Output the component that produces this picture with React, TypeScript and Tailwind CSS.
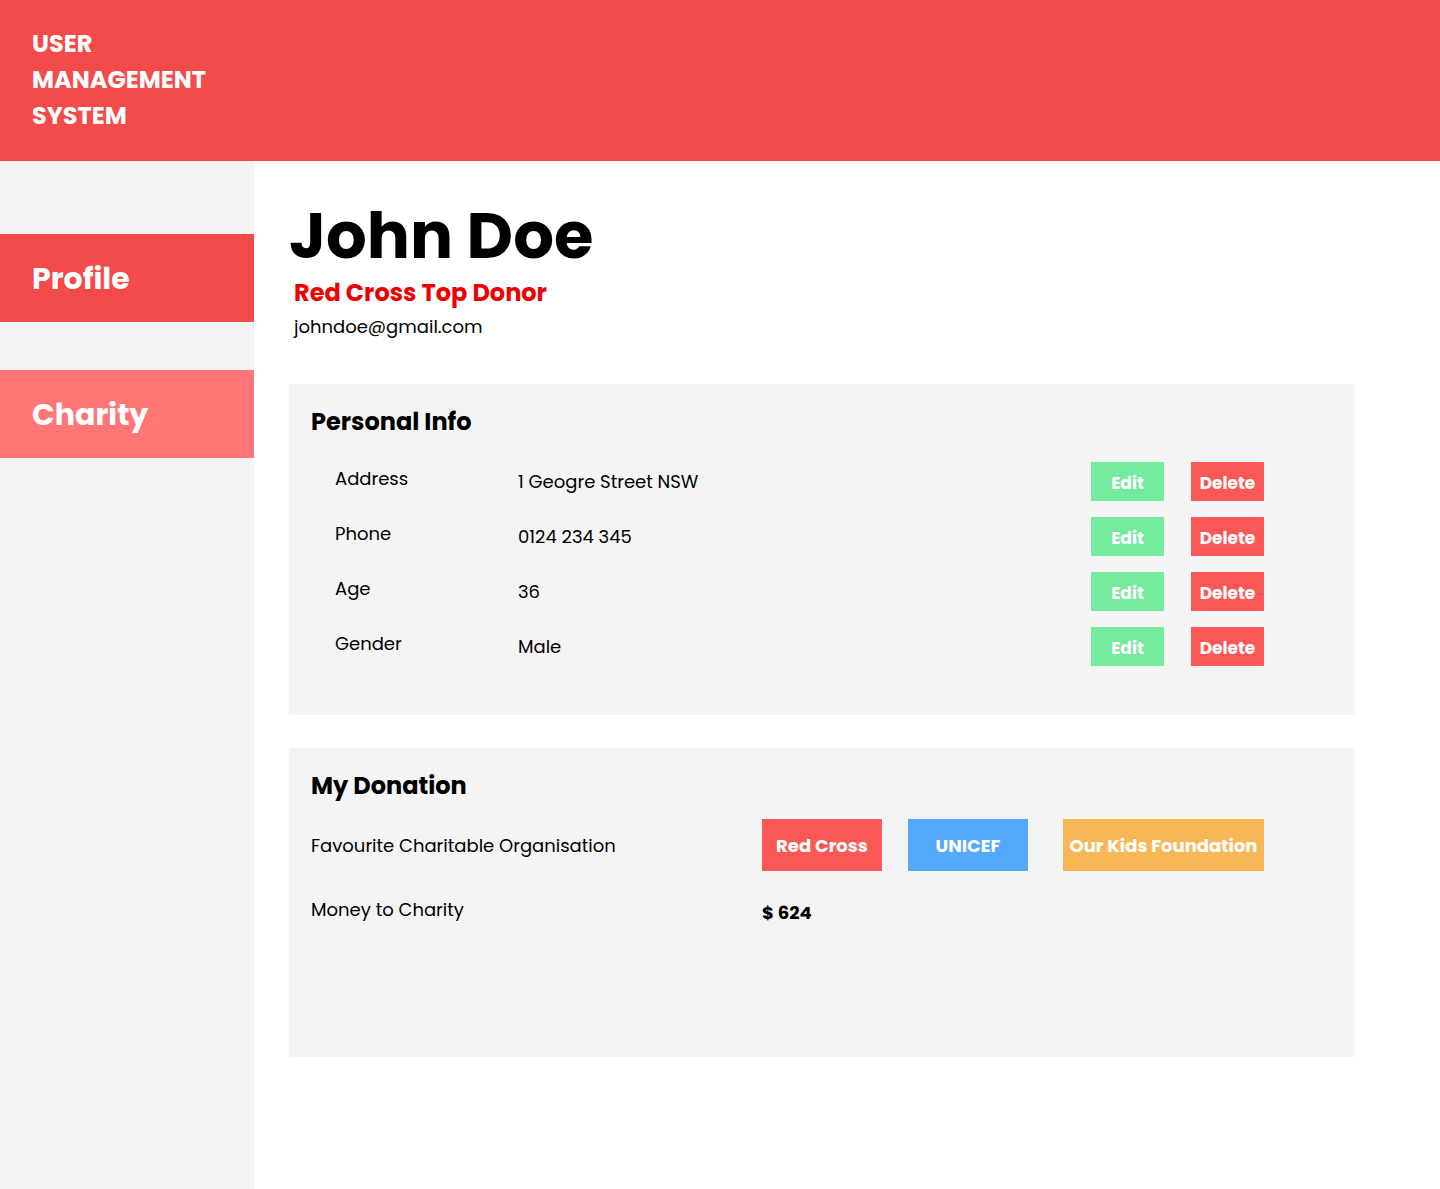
import React from "react";

const rows = [
  { label: "Address", value: "1 Geogre Street NSW" },
  { label: "Phone", value: "0124 234 345" },
  { label: "Age", value: "36" },
  { label: "Gender", value: "Male" },
];

const orgs = [
  { name: "Red Cross", cls: "bg-[#fa5757] w-[120px]" },
  { name: "UNICEF", cls: "bg-[#55a9fa] w-[120px] ml-[26px]" },
  { name: "Our Kids Foundation", cls: "bg-[#f8b756] w-[201px] ml-[35px]" },
];

export default function App() {
  return (
    <div className="min-h-[1189px] flex flex-col font-['Poppins','Inter',sans-serif] text-black">
      {/* Header */}
      <header className="h-[161px] bg-[#f34a4a] px-8 pt-[26px]">
        <h1 className="text-white font-bold text-[24px] leading-[36px]">
          USER
          <br />
          MANAGEMENT
          <br />
          SYSTEM
        </h1>
      </header>

      <div className="flex flex-1">
        {/* Sidebar */}
        <aside className="w-[254px] bg-[#f4f4f4] pt-[73px] flex flex-col gap-[48px]">
          <button className="h-[88px] bg-[#f34a4a] text-white text-[30px] font-bold text-left px-8">
            Profile
          </button>
          <button className="h-[88px] bg-[#ff7676] text-white text-[30px] font-bold text-left px-8">
            Charity
          </button>
        </aside>

        {/* Main */}
        <main className="flex-1 bg-white pl-[35px] pr-[85px] pt-[40px] pb-[132px]">
          <h2 className="text-[64px] font-bold leading-[70px]">John Doe</h2>
          <p className="pl-[5px] text-[#ee0000] text-[24px] font-bold leading-[30px] mt-[7px]">
            Red Cross Top Donor
          </p>
          <p className="pl-[5px] text-[18px] leading-[26px] mt-[6px]">johndoe@gmail.com</p>

          {/* Personal Info */}
          <section className="mt-[44px] bg-[#f4f4f4] h-[331px] pl-[22px] pt-[22px]">
            <h3 className="text-[24px] font-bold leading-[32px]">Personal Info</h3>
            <div className="mt-[24px] flex flex-col gap-[16px]">
              {rows.map((r) => (
                <div key={r.label} className="flex items-center h-[39px]">
                  <span className="w-[207px] pl-[24px] text-[18px] -mt-[6px]">{r.label}</span>
                  <span className="w-[573px] text-[18px]">{r.value}</span>
                  <button className="w-[73px] h-[39px] pt-[4px] bg-[#74ea9c] text-white text-[17px] font-bold">
                    Edit
                  </button>
                  <button className="ml-[27px] w-[73px] h-[39px] pt-[4px] bg-[#fa5757] text-white text-[17px] font-bold">
                    Delete
                  </button>
                </div>
              ))}
            </div>
          </section>

          {/* My Donation */}
          <section className="mt-[33px] bg-[#f4f4f4] h-[309px] pl-[22px] pt-[22px]">
            <h3 className="text-[24px] font-bold leading-[32px]">My Donation</h3>
            <div className="mt-[17px] flex items-center">
              <span className="w-[451px] text-[18px]">Favourite Charitable Organisation</span>
              {orgs.map((o) => (
                <button
                  key={o.name}
                  className={`h-[52px] text-white text-[18px] font-bold ${o.cls}`}
                >
                  {o.name}
                </button>
              ))}
            </div>
            <div className="mt-[25px] flex items-start h-[40px]">
              <span className="w-[451px] text-[18px] leading-[28px]">Money to Charity</span>
              <span className="text-[18px] font-bold leading-[28px] mt-[3px]">$ 624</span>
            </div>
          </section>
        </main>
      </div>
    </div>
  );
}
